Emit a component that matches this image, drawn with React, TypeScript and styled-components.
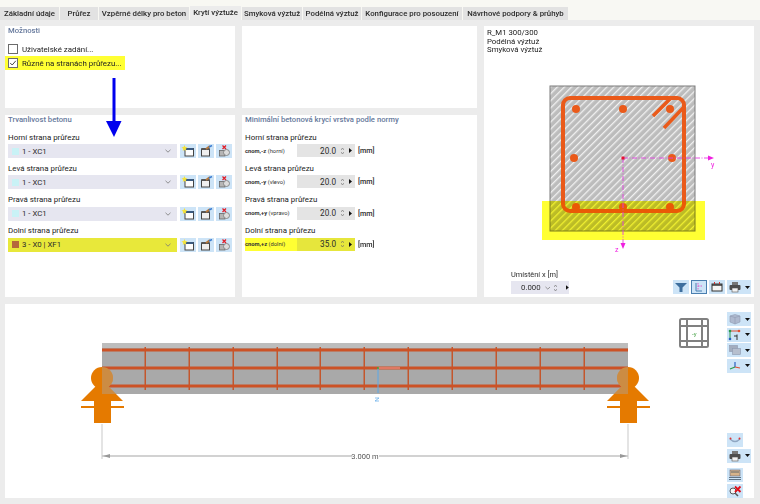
import React from 'react';
import styled, { createGlobalStyle } from 'styled-components';

const Global = createGlobalStyle`
    html, body { margin: 0; padding: 0; background: #ececec; overflow: hidden; }
    body { font-family: Roboto, "Liberation Sans", sans-serif; color: #2b2b2b; }
`;

const Page = styled.div`
    position: relative;
    width: 760px;
    height: 504px;
    background: #ececec;
`;

const TabBar = styled.div`
    display: flex;
    align-items: flex-end;
    gap: 1px;
    height: 20px;
    background: #f8f8f3;
`;

const Tab = styled.div<{ $active?: boolean; $w: number }>`
    width: ${p => p.$w}px;
    height: ${p => (p.$active ? 14 : 13)}px;
    line-height: ${p => (p.$active ? 14 : 13)}px;
    text-align: center;
    font-size: 7.8px;
    font-weight: 500;
    white-space: nowrap;
    background: ${p => (p.$active ? '#ececec' : '#e2e2e2')};
`;

const Grid = styled.div`
    display: grid;
    grid-template-columns: 230px 235px 270px;
    grid-template-rows: 82px 182px 194px;
    gap: 7px;
    padding: 6px 6px 0 5px;
`;

const Panel = styled.section`
    background: #fff;
    padding: 0 3px;
    min-width: 0;
`;

const SidePanel = styled(Panel)`
    grid-column: 3;
    grid-row: 1 / span 2;
    display: flex;
    flex-direction: column;
    padding: 3px 3px 3px 3px;
`;

const ViewPanel = styled.section`
    grid-column: 1 / span 3;
    display: flex;
    background: #fff;
`;

const Heading = styled.div`
    font-size: 7.7px;
    font-weight: 500;
    line-height: 10px;
    height: 10px;
    color: #66799c;
`;

const CheckRow = styled.div<{ $mark?: boolean }>`
    display: flex;
    align-items: center;
    gap: 4px;
    width: 117px;
    height: 14px;
    margin-left: -3px;
    padding-left: 3px;
    font-size: 7.9px;
    color: #222;
    background: ${p => (p.$mark ? '#ffff33' : 'transparent')};
`;

const CheckGroup = styled.div`
    display: flex;
    flex-direction: column;
    margin-top: 6px;
`;

const Box = styled.span`
    display: flex;
    width: 8px;
    height: 8px;
    border: 1px solid #6b6b6b;
    background: #fff;
`;

const Fields = styled.div`
    display: flex;
    flex-direction: column;
    margin-top: 3px;
`;

const FieldLabel = styled.div`
    font-size: 7.9px;
    line-height: 10px;
    height: 10px;
    margin: 4.5px 0 1.5px;
    color: #222;
`;

const FieldBlock = styled.div`
    height: 31.3px;
`;

const ComboRow = styled.div`
    display: flex;
    gap: 2px;
`;

const Combo = styled.div<{ $mark?: boolean }>`
    display: flex;
    align-items: center;
    width: 169px;
    height: 14px;
    margin-right: 1px;
    padding: 0 6px 0 4px;
    box-sizing: border-box;
    background: ${p => (p.$mark ? '#e8e83a' : '#e6e6f0')};
    font-size: 7.8px;
`;

const Swatch = styled.span<{ $color: string }>`
    width: 7px;
    height: 7px;
    margin-right: 3px;
    background: ${p => p.$color};
`;

const ComboText = styled.span`
    flex: 1;
`;

const IconBtn = styled.div`
    display: flex;
    align-items: center;
    justify-content: center;
    width: 16px;
    height: 14px;
    background: #cde4f7;
`;

const ValueRow = styled.div`
    display: flex;
    align-items: center;
    height: 13px;
`;

const Symbol = styled.span`
    width: 52px;
    font-size: 5.8px;
    color: #333;
    white-space: nowrap;
`;

const SymbolName = styled.b`
    font-weight: 700;
`;

const MarkedGroup = styled.div<{ $mark?: boolean }>`
    display: flex;
    align-items: center;
    height: 13px;
    background: ${p => (p.$mark ? '#ffff33' : 'transparent')};
`;

const Input = styled.div<{ $mark?: boolean }>`
    display: flex;
    align-items: center;
    width: 58px;
    height: 13px;
    box-sizing: border-box;
    padding-right: 3px;
    font-size: 8.2px;
    background: ${p => (p.$mark ? '#e6e63c' : '#e4e4e4')};
`;

const InputValue = styled.span`
    flex: 1;
    text-align: right;
    padding-right: 5px;
`;

const Unit = styled.span`
    margin-left: 3px;
    font-size: 7.2px;
    font-weight: 500;
`;

const Spinner = styled.span`
    display: flex;
    flex-direction: column;
    gap: 2px;
    margin-right: 5px;
`;

const Caption = styled.div`
    font-size: 7.8px;
    line-height: 8.5px;
    color: #222;
`;

const SectionDrawing = styled.svg`
    display: block;
    margin: 1.5px -3px 0;
    flex: none;
`;

const Footer = styled.div`
    display: flex;
    align-items: flex-end;
    justify-content: space-between;
    flex: 1;
    padding: 0 0 0 24px;
`;

const PlaceField = styled.div`
    display: flex;
    flex-direction: column;
    gap: 2px;
    font-size: 7.4px;
`;

const PlaceInput = styled.div`
    display: flex;
    align-items: center;
    width: 58px;
    height: 13px;
    padding-left: 10px;
    box-sizing: border-box;
    gap: 4px;
    background: #e6e6f0;
    font-size: 7.8px;
`;

const FootTools = styled.div`
    display: flex;
    gap: 2px;
`;

const ToolBtn = styled.div<{ $on?: boolean; $w?: number }>`
    display: flex;
    align-items: center;
    gap: 3px;
    width: ${p => p.$w ?? 16}px;
    height: 14px;
    padding-left: 1px;
    box-sizing: border-box;
    background: #cde4f7;
    border: ${p => (p.$on ? '1px solid #4a7fb0' : 'none')};
`;

const Scene = styled.svg`
    display: block;
    flex: none;
`;

const ViewTools = styled.div`
    display: flex;
    flex-direction: column;
    gap: 1.5px;
    width: 24px;
    margin-left: 1px;
    padding-top: 8px;
`;

const ViewGap = styled.div<{ $h: number }>`
    height: ${p => p.$h}px;
`;

const Overlay = styled.svg`
    position: absolute;
    left: 105px;
    top: 78px;
`;

const Caret = () => (
    <svg width="5" height="3" viewBox="0 0 5 3"><path d="M0 0h5L2.5 3z" fill="#111" /></svg>
);

const Chevron = () => (
    <svg width="6" height="4" viewBox="0 0 6 4"><path d="M.5.8 3 3.2 5.5.8" fill="none" stroke="#777" strokeWidth=".8" /></svg>
);

const SpinnerArrows = () => (
    <Spinner>
        <svg width="3" height="2" viewBox="0 0 3 2" display="block"><path d="M0 2 1.5 0 3 2" fill="none" stroke="#666" strokeWidth=".6" /></svg>
        <svg width="3" height="2" viewBox="0 0 3 2" display="block"><path d="M0 0 1.5 2 3 0" fill="none" stroke="#666" strokeWidth=".6" /></svg>
    </Spinner>
);

const RightArrow = () => (
    <svg width="3" height="5" viewBox="0 0 3 5"><path d="M0 0 3 2.5 0 5z" fill="#111" /></svg>
);

const NewIcon = () => (
    <svg width="14" height="12" viewBox="0 0 14 12">
        <rect x="4" y="3.5" width="8.5" height="7.5" fill="#fdfdfd" stroke="#444" />
        <rect x="4" y="3" width="8.5" height="2" fill="#3a5a80" />
        <path d="M3.5 0 4.4 2 6.5 2.4 4.8 3.8 5.2 6 3.5 4.8 1.800 6 2.200 3.800.5 2.400 2.600 2z" fill="#f5e33a" />
    </svg>
);

const EditIcon = () => (
    <svg width="14" height="12" viewBox="0 0 14 12">
        <rect x="2.500" y="4" width="8" height="7" fill="#efefef" stroke="#444" />
        <rect x="2.500" y="3" width="8" height="2" fill="#555" />
        <path d="M7 4 11 1" stroke="#b5793f" strokeWidth="2" />
        <path d="M10 2 13 .5" stroke="#3a7bd0" strokeWidth="1.500" />
    </svg>
);

const DeleteIcon = () => (
    <svg width="14" height="12" viewBox="0 0 14 12">
        <rect x="2.500" y="5.500" width="5.500" height="5.500" fill="#b5b5b5" stroke="#666" strokeWidth=".8" />
        <circle cx="9.500" cy="7.500" r="3" fill="#dcdcdc" stroke="#777" strokeWidth=".8" />
        <path d="M5.500.5 9 4M9 .5 5.500 4" stroke="#e0202a" strokeWidth="1.300" />
    </svg>
);

const FilterIcon = () => (
    <svg width="14" height="12" viewBox="0 0 14 12"><path d="M1 2h12L8.500 6.500V11h-3V6.500z" fill="#3f6f9e" /></svg>
);

const AxisIcon = () => (
    <svg width="12" height="12" viewBox="0 0 12 12">
        <path d="M3 2V10H9" fill="none" stroke="#4a7fb0" />
        <path d="M5 2v7M5 5h5" fill="none" stroke="#e040c0" strokeWidth=".8" strokeDasharray="1.500 1" />
    </svg>
);

const FrameIcon = () => (
    <svg width="14" height="12" viewBox="0 0 14 12">
        <rect x="2" y="3" width="10" height="7" fill="#f5f5f5" stroke="#333" />
        <path d="M2 4h10" stroke="#333" strokeWidth="1.500" />
        <path d="M4.500 1v2M9.500 1v2" stroke="#c33" />
    </svg>
);

const PrintIcon = () => (
    <svg width="14" height="12" viewBox="0 0 14 12">
        <rect x="4" y="1" width="6" height="3" fill="#777" />
        <rect x="1.500" y="4" width="11" height="5" rx="1" fill="#4d4d4d" />
        <rect x="4" y="7" width="6" height="4" fill="#f3f3f3" stroke="#555" strokeWidth=".6" />
    </svg>
);

const CubeIcon = () => (
    <svg width="14" height="12" viewBox="0 0 14 12">
        <path d="M2 3 7 1.500 12 3V9L7 11 2 9z" fill="#aeb9cf" stroke="#8d98b0" strokeWidth=".6" />
        <path d="M2 3 7 4.500 12 3M7 4.500V11" fill="none" stroke="#8d98b0" strokeWidth=".6" />
    </svg>
);

const AxesIcon = () => (
    <svg width="14" height="12" viewBox="0 0 14 12">
        <path d="M2 2h9" stroke="#e05030" />
        <path d="M2 2v8" stroke="#2a9a50" />
        <circle cx="2" cy="2" r="1.300" fill="#2a9a50" />
        <circle cx="11" cy="2" r="1.300" fill="#e05030" />
        <circle cx="2" cy="10" r="1.300" fill="#2a60c0" />
        <path d="M6 7h3M9 5.500V11" stroke="#333" />
    </svg>
);

const PlanesIcon = () => (
    <svg width="14" height="12" viewBox="0 0 14 12">
        <rect x="1.500" y="1.500" width="8" height="6" fill="#a3adbe" stroke="#8d98b0" strokeWidth=".6" />
        <rect x="4.500" y="4.500" width="8" height="6" fill="#b6bfce" stroke="#8d98b0" strokeWidth=".6" />
    </svg>
);

const TripodIcon = () => (
    <svg width="14" height="12" viewBox="0 0 14 12">
        <path d="M7 7V2" stroke="#2a60c0" strokeWidth="1.200" />
        <path d="M7 7 12 8" stroke="#e05030" strokeWidth="1.200" />
        <path d="M7 7 2 9" stroke="#2a9a50" strokeWidth="1.200" />
    </svg>
);

const DeformIcon = () => (
    <svg width="14" height="12" viewBox="0 0 14 12">
        <path d="M2 5q5 5 10 0" fill="none" stroke="#8fa6c2" strokeWidth="1.300" />
        <circle cx="2.500" cy="4.500" r="1" fill="#d33" />
        <circle cx="11.500" cy="4.500" r="1" fill="#d33" />
    </svg>
);

const ReportIcon = () => (
    <svg width="14" height="12" viewBox="0 0 14 12">
        <rect x="2" y="1" width="10" height="6" fill="#d8b48a" stroke="#667" strokeWidth=".6" />
        <path d="M1 8.500h12M1 10.500h12M3 3h8" stroke="#456" strokeWidth=".8" />
    </svg>
);

const ClearIcon = () => (
    <svg width="14" height="12" viewBox="0 0 14 12">
        <circle cx="5" cy="6" r="3" fill="#f4f4f4" stroke="#555" />
        <path d="M7 8 10 11" stroke="#555" strokeWidth="1.500" />
        <path d="M7 1.500 12.500 7M12.500 1.500 7 7" stroke="#e0101a" strokeWidth="1.800" />
    </svg>
);

const sides = [
    { label: 'Horní strana průřezu', value: '1 - XC1', color: '#c9f2f6', sym: 'cnom,-z', note: '(horní)', num: '20.0' },
    { label: 'Levá strana průřezu', value: '1 - XC1', color: '#c9f2f6', sym: 'cnom,-y', note: '(vlevo)', num: '20.0' },
    { label: 'Pravá strana průřezu', value: '1 - XC1', color: '#c9f2f6', sym: 'cnom,+y', note: '(vpravo)', num: '20.0' },
    { label: 'Dolní strana průřezu', value: '3 - X0 | XF1', color: '#b5673c', sym: 'cnom,+z', note: '(dolní)', num: '35.0', mark: true },
];

const tabs: [string, number][] = [
    ['Základní údaje', 59], ['Průřez', 38], ['Vzpěrné délky pro beton', 90], ['Krytí výztuže', 51],
    ['Smyková výztuž', 60], ['Podélná výztuž', 58], ['Konfigurace pro posouzení', 100], ['Návrhové podpory & průhyb', 105],
];

const stirrups = [145, 189, 233, 277, 320, 364, 408, 452, 496, 540, 584];

const Support = ({ x, fill = '#e57a00' }: { x: number; fill?: string }) => (
    <g fill={fill}>
        <circle cx={x} cy={74} r={11} />
        <path d={`M${x - 21} 97 L${x - 6} 82 H${x + 6} L${x + 21} 97z`} />
        <rect x={x - 21} y={102} width={43} height={2} />
        <rect x={x - 8} y={97} width={17} height={5} />
        <rect x={x - 8} y={104} width={17} height={15} />
    </g>
);

export default function App() {
    return (
        <Page>
            <Global />
            <TabBar>
                {tabs.map(([t, w]) => <Tab key={t} $w={w} $active={t === 'Krytí výztuže'}>{t}</Tab>)}
            </TabBar>
            <Grid>
                <Panel>
                    <Heading>Možnosti</Heading>
                    <CheckGroup>
                        <CheckRow><Box /> Uživatelské zadání...</CheckRow>
                        <CheckRow $mark>
                            <Box>
                                <svg width="8" height="8" viewBox="0 0 8 8"><path d="M1.200 4 3.200 6 6.800 1.800" fill="none" stroke="#333" strokeWidth=".9" /></svg>
                            </Box>
                            Různě na stranách průřezu...
                        </CheckRow>
                    </CheckGroup>
                </Panel>
                <Panel />
                <SidePanel>
                    <div>
                        <Caption>R_M1 300/300</Caption>
                        <Caption>Podélná výztuž</Caption>
                        <Caption>Smyková výztuž</Caption>
                    </div>
                    <SectionDrawing width="270" height="205" viewBox="484 56 270 205">
                        <defs>
                            <pattern id="hatch" width="5" height="5" patternUnits="userSpaceOnUse" patternTransform="rotate(45)">
                                <rect width="5" height="5" fill="#bcbcbc" />
                                <rect width="1.300" height="5" fill="#f1f1f1" />
                            </pattern>
                        </defs>
                        <rect x="550" y="86" width="145" height="145" fill="url(#hatch)" stroke="#7c7c7c" strokeWidth="1" />
                        <rect x="563" y="98" width="121" height="113" rx="7" fill="none" stroke="#ea5a1a" strokeWidth="4" />
                        <path d="M672 97 653 116M684 107 664 128" fill="none" stroke="#ea5a1a" strokeWidth="3.500" />
                        {[[576, 109], [623, 109], [670, 109], [574, 158], [672, 158], [576, 207], [623, 207], [670, 207]].map(([cx, cy]) => (
                            <circle key={`${cx}-${cy}`} cx={cx} cy={cy} r="4" fill="#ea5a1a" />
                        ))}
                        <rect x="542" y="201" width="163" height="39" fill="#ffff33" style={{ mixBlendMode: 'multiply' }} />
                        <g stroke="#e23ee0" strokeWidth=".9" strokeDasharray="5 1.500 1 1.500" fill="none">
                            <path d="M623 158H708" />
                            <path d="M623 158V243" />
                        </g>
                        <path d="M714 158 708 155.500V160.500z M623 249 620.500 243H625.500z" fill="#f020e0" />
                        <rect x="621.500" y="156.500" width="3" height="3" fill="#e81030" />
                        <text x="711" y="167" fontSize="7" fill="#f020e0" fontFamily="Roboto, sans-serif">y</text>
                        <text x="615" y="252" fontSize="7" fill="#f020e0" fontFamily="Roboto, sans-serif">z</text>
                    </SectionDrawing>
                    <Footer>
                        <PlaceField>
                            Umístění x [m]
                            <PlaceInput>0.000 <Chevron /><SpinnerArrows /><RightArrow /></PlaceInput>
                        </PlaceField>
                        <FootTools>
                            <ToolBtn><FilterIcon /></ToolBtn>
                            <ToolBtn $on><AxisIcon /></ToolBtn>
                            <ToolBtn><FrameIcon /></ToolBtn>
                            <ToolBtn $w={24}><PrintIcon /><Caret /></ToolBtn>
                        </FootTools>
                    </Footer>
                </SidePanel>
                <Panel>
                    <Heading>Trvanlivost betonu</Heading>
                    <Fields>
                        {sides.map(s => (
                            <FieldBlock key={s.label}>
                                <FieldLabel>{s.label}</FieldLabel>
                                <ComboRow>
                                    <Combo $mark={s.mark}>
                                        <Swatch $color={s.color} />
                                        <ComboText>{s.value}</ComboText>
                                        <Chevron />
                                    </Combo>
                                    <IconBtn><NewIcon /></IconBtn>
                                    <IconBtn><EditIcon /></IconBtn>
                                    <IconBtn><DeleteIcon /></IconBtn>
                                </ComboRow>
                            </FieldBlock>
                        ))}
                    </Fields>
                </Panel>
                <Panel>
                    <Heading>Minimální betonová krycí vrstva podle normy</Heading>
                    <Fields>
                        {sides.map(s => (
                            <FieldBlock key={s.label}>
                                <FieldLabel>{s.label}</FieldLabel>
                                <ValueRow>
                                    <MarkedGroup $mark={s.mark}>
                                        <Symbol><SymbolName>{s.sym}</SymbolName> {s.note}</Symbol>
                                        <Input $mark={s.mark}>
                                            <InputValue>{s.num}</InputValue>
                                            <SpinnerArrows />
                                            <RightArrow />
                                        </Input>
                                    </MarkedGroup>
                                    <Unit>[mm]</Unit>
                                </ValueRow>
                            </FieldBlock>
                        ))}
                    </Fields>
                </Panel>
                <ViewPanel>
                    <Scene width="721" height="194" viewBox="5 304 721 194">
                        <defs>
                            <clipPath id="beam"><rect x="102" y="39" width="526" height="51" /></clipPath>
                        </defs>
                        <g transform="translate(0 304)">
                            <rect x="102" y="39" width="526" height="51" fill="#a9a9a9" />
                            <rect x="102" y="39" width="526" height="5" fill="#bdbdbd" />
                            {stirrups.map(x => (
                                <rect key={x} x={x - 0.5} y="43" width="1.500" height="43" fill="#c4562c" />
                            ))}
                            {[46, 64, 82].map(y => (
                                <rect key={y} x="102" y={y - 1.5} width="526" height="3" fill="#cc5226" />
                            ))}
                            <path d="M378 64H400" stroke="#f4a0a0" strokeWidth="1" />
                            <path d="M378 64V89" stroke="#5aa8e8" strokeWidth="1" />
                            <circle cx="378" cy="64" r="1" fill="#3aa83a" />
                            <path d="M375 94h4l-4 3h4" fill="none" stroke="#5aa8e8" strokeWidth=".7" />
                            <path d="M102 120V155M628 120V155" stroke="#c9c9c9" strokeWidth="1" />
                            <path d="M102 152H352M379 152H628" stroke="#c4c4c4" strokeWidth="1.500" />
                            <path d="M103 152 110 150V154zM627 152 620 150V154z" fill="#999" />
                            <text x="365" y="155" fontSize="7.500" textAnchor="middle" fill="#555" fontFamily="Roboto, sans-serif">3.000 m</text>
                            <Support x={102} />
                            <Support x={628} />
                            <g clipPath="url(#beam)" opacity=".4">
                                <Support x={102} fill="#a9a9a9" />
                                <Support x={628} fill="#a9a9a9" />
                            </g>
                            <g fill="none" stroke="#808080" strokeWidth="2">
                                <rect x="680" y="15" width="28" height="28" rx="1.500" />
                                <path d="M687 15V43M702 15V43M680 22H708M680 37H708" />
                            </g>
                            <text x="692" y="32" fontSize="6" fill="#4aa34a" fontFamily="Roboto, sans-serif">-y</text>
                        </g>
                    </Scene>
                    <ViewTools>
                        <ToolBtn $w={24}><CubeIcon /><Caret /></ToolBtn>
                        <ToolBtn $w={24}><AxesIcon /><Caret /></ToolBtn>
                        <ToolBtn $w={24}><PlanesIcon /><Caret /></ToolBtn>
                        <ToolBtn $w={24}><TripodIcon /><Caret /></ToolBtn>
                        <ViewGap $h={57.5} />
                        <ToolBtn><DeformIcon /></ToolBtn>
                        <ToolBtn $w={24}><PrintIcon /><Caret /></ToolBtn>
                        <ViewGap $h={2.5} />
                        <ToolBtn><ReportIcon /></ToolBtn>
                        <ToolBtn><ClearIcon /></ToolBtn>
                    </ViewTools>
                </ViewPanel>
            </Grid>
            <Overlay width="18" height="60" viewBox="0 0 18 60">
                <path d="M7.500 0H10.500V43H16.500L9 59 1 43H7.500z" fill="#0000ee" />
            </Overlay>
        </Page>
    );
}
